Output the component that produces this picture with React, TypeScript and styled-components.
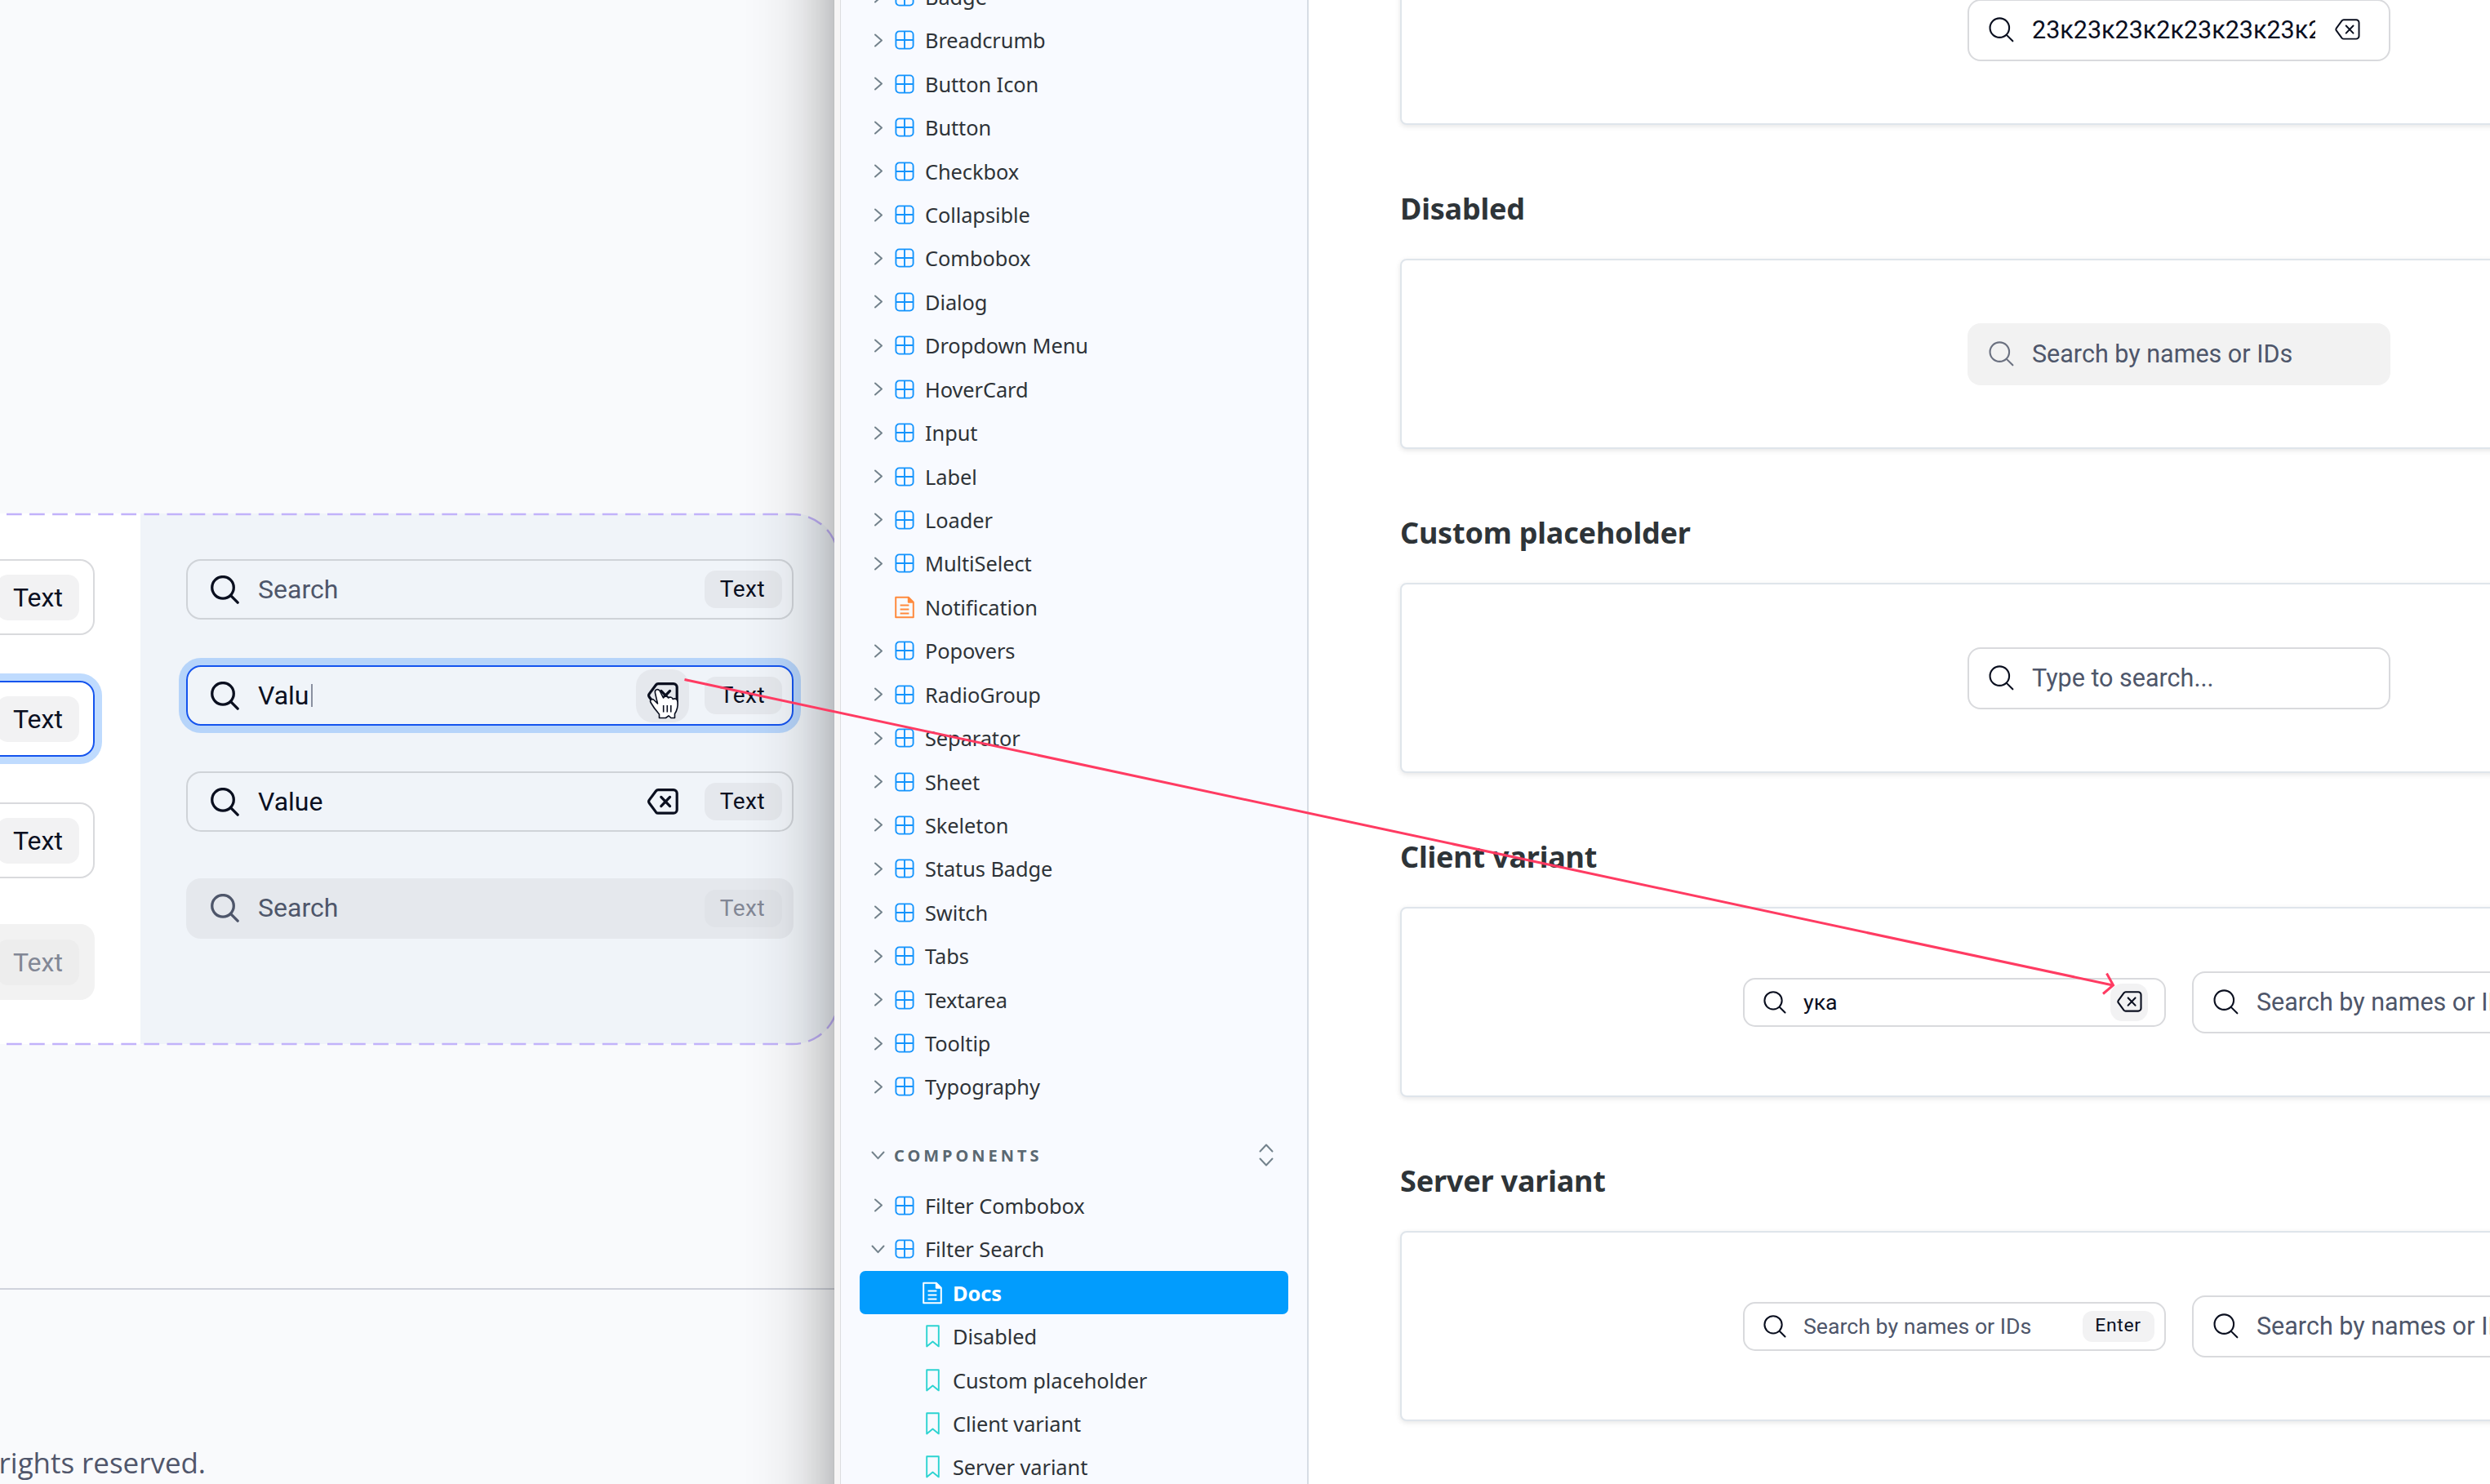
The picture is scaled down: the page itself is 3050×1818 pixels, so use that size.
import React from "react";
import styled, { createGlobalStyle, css } from "styled-components";

const GlobalStyle = createGlobalStyle`
  *, *::before, *::after { box-sizing: border-box; }
  body { margin: 0; background: #ffffff; }
`;

const ui = `Roboto, "Noto Sans", sans-serif`;
const book = `"Noto Sans", "Open Sans", sans-serif`;

const Screen = styled.div`
  position: relative;
  display: flex;
  width: 3050px;
  height: 1818px;
  overflow: hidden;
  background: #ffffff;
  font-family: ${ui};
`;

/* ---------- design canvas (left) ---------- */

const Canvas = styled.section`
  position: relative;
  display: flex;
  flex-direction: column;
  flex: none;
  width: 1022px;
  height: 100%;
  overflow: hidden;
  background: #f9fafc;
`;

const CanvasShade = styled.div`
  position: absolute;
  inset: 0 0 0 auto;
  width: 112px;
  border-right: 1px solid rgba(0, 0, 0, 0.24);
  background: linear-gradient(
    to right,
    rgba(0, 0, 0, 0) 0%,
    rgba(0, 0, 0, 0.012) 22%,
    rgba(0, 0, 0, 0.035) 45%,
    rgba(0, 0, 0, 0.08) 65%,
    rgba(0, 0, 0, 0.145) 84%,
    rgba(0, 0, 0, 0.21) 100%
  );
`;

const VariantPanel = styled.div`
  position: relative;
  display: flex;
  width: 1027px;
  height: 650px;
  margin-top: 629px;
`;

const PanelOutline = styled.svg`
  position: absolute;
  left: 0;
  top: 0;
  overflow: visible;
`;

const LightColumn = styled.div`
  display: flex;
  flex-direction: column;
  align-items: flex-end;
  gap: 56px;
  width: 172px;
  padding: 56px 56px 0 0;
  background: #ffffff;
`;

const TintColumn = styled.div`
  display: flex;
  flex-direction: column;
  gap: 56.2px;
  flex: 1;
  padding: 56px 56px 0;
  border-radius: 0 56px 56px 0;
  background: #f0f4f9;
`;

const Footer = styled.footer`
  height: 240px;
  margin-top: 299px;
  padding-top: 185px;
  border-top: 2px solid #d0d3dc;
`;

const FooterText = styled.p`
  display: flex;
  justify-content: flex-end;
  width: 252px;
  margin: 0;
  font: 400 35px/54px "Open Sans", sans-serif;
  letter-spacing: -0.05px;
  white-space: nowrap;
  color: #50566b;
`;

/* ---------- search field ---------- */

type Kind = "tall" | "canvas" | "small" | "large";
type State = "idle" | "focus" | "disabled";

const kinds = {
  tall: css`width: 360px; height: 93px; padding: 0 17px; border-radius: 18px; font-size: 32px;`,
  canvas: css`width: 744px; height: 74px; padding: 0 12px 0 28px; border-radius: 18px; font-size: 32px;`,
  small: css`width: 518px; height: 60px; padding: 0 12px 0 23px; border-radius: 15px; font-size: 26.7px;`,
  large: css`width: 518px; height: 76px; padding: 0 12px 0 24px; border-radius: 16px; font-size: 30.5px;`,
};

const Field = styled.div<{ $kind: Kind; $state: State; $tint?: boolean }>`
  display: flex;
  align-items: center;
  flex: none;
  border: 2px solid #d9dadd;
  color: #0a0f1f;
  line-height: 1;
  ${(p) => kinds[p.$kind]}
  ${(p) => p.$tint && css`border-color: #cfd3d8;`}
  ${(p) =>
    p.$state === "focus" &&
    css`
      border-color: #1454ee;
      box-shadow: 0 0 0 9px ${p.$tint ? "#b6d4fa" : "#bfdbfe"};
    `}
  ${(p) =>
    p.$state === "disabled" &&
    css`
      border-color: transparent;
      background: ${p.$tint ? "#e5e8ed" : "#f2f2f2"};
    `}
`;

const Value = styled.span<{ $muted?: boolean; $gap: number; $width?: number }>`
  display: block;
  flex: none;
  margin-left: ${(p) => p.$gap}px;
  ${(p) => p.$width && css`width: ${p.$width}px;`}
  padding-top: 1px;
  overflow: hidden;
  line-height: 1.3;
  white-space: nowrap;
  color: ${(p) => (p.$muted ? "#4e566a" : "#0a0f1f")};
`;

const Caret = styled.span`
  width: 2px;
  height: 28px;
  margin-left: 3px;
  background: #8a90a0;
`;

const Spacer = styled.span`
  flex: 1;
`;

const Key = styled.kbd<{ $kind: Kind; $tint?: boolean; $off?: boolean }>`
  display: flex;
  align-items: center;
  justify-content: center;
  flex: none;
  font-family: ${ui};
  background: ${(p) => (p.$tint ? "#e5e8ed" : "#f2f2f3")};
  ${(p) => p.$kind === "tall" && css`width: 101px; height: 56px; border-radius: 14px; font-size: 32px;`}
  ${(p) => p.$kind === "canvas" && css`width: 95px; height: 46px; padding-right: 2px; border-radius: 14px; font-size: 28px; letter-spacing: 0.5px;`}
  ${(p) => p.$kind === "small" && css`width: 88px; height: 38px; padding-right: 1px; border-radius: 12px; font-size: 22.9px; letter-spacing: 0.7px;`}
  ${(p) =>
    p.$off &&
    css`
      color: #828795;
      background: ${p.$tint ? "#e0e3e8" : "#ededed"};
    `}
`;

const ClearButton = styled.span<{ $size: number; $gap: number; $hover?: string }>`
  display: flex;
  align-items: center;
  justify-content: center;
  flex: none;
  width: ${(p) => p.$size}px;
  height: ${(p) => p.$size}px;
  margin-right: ${(p) => p.$gap}px;
  border-radius: ${(p) => p.$size * 0.32}px;
  background: ${(p) => p.$hover ?? "transparent"};
`;

const Magnifier = ({ size, weight, color = "#0a0f1f" }: { size: number; weight: number; color?: string }) => (
  <svg width={size} height={size} viewBox="0 0 34 34" fill="none" stroke={color} strokeWidth={weight} strokeLinecap="round">
    <circle cx="14.6" cy="14.4" r="12.9" />
    <path d="M24 24L32.2 32.2" />
  </svg>
);

const Erase = ({ width, weight }: { width: number; weight: number }) => (
  <svg width={width} height={(width * 32) / 38} viewBox="0 0 38 32" fill="none" stroke="#0a0f1f" strokeWidth={weight} strokeLinecap="round" strokeLinejoin="round">
    <path d="M13.2 1.6H32a4.2 4.2 0 0 1 4.2 4.2V26a4.2 4.2 0 0 1-4.2 4.2H13.2a3.4 3.4 0 0 1-2.7-1.3L2.4 18a3.4 3.4 0 0 1 0-4.1L10.5 3a3.4 3.4 0 0 1 2.7-1.4Z" />
    <path d="M16.8 10.4L27.6 21.6M27.6 10.4L16.8 21.6" />
  </svg>
);

const CanvasField = ({ text, state = "idle", muted, clear, caret }: { text: string; state?: State; muted?: boolean; clear?: "idle" | "hover"; caret?: boolean }) => (
  <Field $kind="canvas" $state={state} $tint>
    <Magnifier size={35} weight={3.2} color={state === "disabled" ? "#4e566a" : undefined} />
    <Value $muted={muted} $gap={23}>{text}</Value>
    {caret && <Caret />}
    <Spacer />
    {clear && (
      <ClearButton $size={65} $gap={19} $hover={clear === "hover" ? "#e5e8ed" : undefined}>
        <Erase width={38} weight={3.2} />
      </ClearButton>
    )}
    <Key $kind="canvas" $tint $off={state === "disabled"}>Text</Key>
  </Field>
);

const TallField = ({ state = "idle" }: { state?: State }) => (
  <Field $kind="tall" $state={state}>
    <Spacer />
    <Key $kind="tall" $off={state === "disabled"}>Text</Key>
  </Field>
);

/* ---------- component browser (right) ---------- */

const Browser = styled.section`
  display: flex;
  flex: 1;
  height: 100%;
  border-left: 7px solid #f6f5f5;
  background: #ffffff;
`;

const Sidebar = styled.nav`
  flex: none;
  width: 574px;
  height: 1860px;
  margin-top: -30.8px;
  padding: 0 23px;
  border-left: 1px solid #dcdde0;
  border-right: 2px solid #d7dde5;
  background: #f8faff;
  font-family: ${book};
`;

const TreeRow = styled.div<{ $active?: boolean; $child?: boolean }>`
  display: grid;
  grid-template-columns: ${(p) => (p.$child ? "73px 41px 1fr" : "39px 41px 1fr")};
  align-items: center;
  height: 53.43px;
  border-radius: 7px;
  color: ${(p) => (p.$active ? "#ffffff" : "#2e3338")};
  background: ${(p) => (p.$active ? "#029cfd" : "transparent")};
  font-size: 25.4px;
  font-weight: ${(p) => (p.$active ? 700 : 400)};
  letter-spacing: -0.08px;
  white-space: nowrap;
`;

const ArrowCell = styled.span`
  display: flex;
  justify-content: center;
  width: 45px;
`;

const IconCell = styled.span`
  display: flex;
  justify-content: center;
  width: 32px;
`;

const GroupRow = styled.div`
  display: flex;
  align-items: center;
  height: 60px;
  margin: 27px 0 5px;
  padding: 0 18px 0 0;
  color: #5a6872;
`;

const GroupName = styled.span`
  flex: 1;
  margin-left: -3px;
  font-size: 20px;
  font-weight: 700;
  letter-spacing: 4px;
`;

const ChevronRight = () => (
  <svg width="12" height="17" viewBox="0 0 12 17" fill="none" stroke="#73828c" strokeWidth="2" strokeLinecap="round" strokeLinejoin="round">
    <path d="M2 1.5L10 8.5L2 15.5" />
  </svg>
);

const ChevronDown = () => (
  <svg width="17" height="11" viewBox="0 0 17 11" fill="none" stroke="#73828c" strokeWidth="2" strokeLinecap="round" strokeLinejoin="round">
    <path d="M1.5 1.5L8.5 9.2L15.5 1.5" />
  </svg>
);

const Unfold = () => (
  <svg width="18" height="28" viewBox="0 0 18 28" fill="none" stroke="#73828c" strokeWidth="2" strokeLinecap="round" strokeLinejoin="round">
    <path d="M1.5 9.5L9 1.5L16.5 9.5M1.5 18.5L9 26.5L16.5 18.5" />
  </svg>
);

const GridIcon = () => (
  <svg width="24" height="24" viewBox="0 0 24 24" fill="none" stroke="#1494fd" strokeWidth="1.9">
    <rect x="1.4" y="1.4" width="21.2" height="21.2" rx="4" />
    <path d="M12 1.5V22.5M1.5 12H22.5" />
  </svg>
);

const DocIcon = ({ color }: { color: string }) => (
  <svg width="24" height="28" viewBox="0 0 24 28" fill="none" stroke={color} strokeWidth="2" strokeLinejoin="round">
    <path d="M1.2 1.8H16.8L22.8 7.8V26.2H1.2Z" />
    <path d="M16.8 1.8V7.8H22.8" fill={color} />
    <path d="M6.6 11.4H17.4M6.6 16.4H17.4M6.6 21.4H17.4" />
  </svg>
);

const BookmarkIcon = () => (
  <svg width="17" height="28" viewBox="0 0 17 28" fill="none" stroke="#2cd3d1" strokeWidth="1.9" strokeLinejoin="round">
    <path d="M1.2 1.2H15.8V26.4L8.5 20.4L1.2 26.4Z" />
  </svg>
);

const Preview = styled.main`
  flex: 1;
  min-width: 0;
  padding-left: 112px;
  overflow: hidden;
`;

const Story = styled.article<{ $first?: boolean }>`
  height: 397px;
  ${(p) => p.$first && css`margin-top: -244px;`}
`;

const StoryTitle = styled.h3`
  margin: 0;
  padding-top: 78px;
  height: 164px;
  color: #2e3438;
  font: 700 36px/50px ${book};
  letter-spacing: -0.2px;
`;

const StoryCard = styled.div`
  display: flex;
  align-items: center;
  justify-content: center;
  gap: 32px;
  width: 1908px;
  height: 233px;
  border: 2px solid #dfe5eb;
  border-radius: 8px;
  box-shadow: 0 2px 6px rgba(0, 0, 0, 0.1);
  background: #ffffff;
`;

const primitives = [
  "Badge", "Breadcrumb", "Button Icon", "Button", "Checkbox", "Collapsible", "Combobox", "Dialog",
  "Dropdown Menu", "HoverCard", "Input", "Label", "Loader", "MultiSelect", "Notification", "Popovers",
  "RadioGroup", "Separator", "Sheet", "Skeleton", "Status Badge", "Switch", "Tabs", "Textarea",
  "Tooltip", "Typography",
];
const stories = ["Disabled", "Custom placeholder", "Client variant", "Server variant"];

const TreeItem = ({ name, open }: { name: string; open?: boolean }) => {
  const isDoc = name === "Notification";
  return (
    <TreeRow>
      <ArrowCell>{!isDoc && (open ? <ChevronDown /> : <ChevronRight />)}</ArrowCell>
      <IconCell>{isDoc ? <DocIcon color="#ff8a3d" /> : <GridIcon />}</IconCell>
      {name}
    </TreeRow>
  );
};

const LargeSearch = ({ text, muted = true, state = "idle", clear }: { text: string; muted?: boolean; state?: State; clear?: boolean }) => (
  <Field $kind="large" $state={state}>
    <Magnifier size={31} weight={2.3} color={state === "disabled" ? "#6b7180" : undefined} />
    <Value $muted={muted} $gap={22} $width={clear ? 347 : undefined}>{text}</Value>
    <Spacer />
    {clear && (
      <ClearButton $size={46} $gap={16}>
        <Erase width={31} weight={2.4} />
      </ClearButton>
    )}
  </Field>
);

const SmallSearch = ({ text, muted, children }: { text: string; muted?: boolean; children: React.ReactNode }) => (
  <Field $kind="small" $state="idle">
    <Magnifier size={28} weight={2.5} />
    <Value $muted={muted} $gap={21}>{text}</Value>
    <Spacer />
    {children}
  </Field>
);

/* ---------- annotation and pointer, over everything ---------- */

const Annotation = styled.svg`
  position: absolute;
  left: 0;
  top: 0;
  pointer-events: none;
`;

const HandPointer = styled.svg`
  position: absolute;
  left: 794px;
  top: 842px;
`;

export default function App() {
  return (
    <Screen>
      <GlobalStyle />
      <Canvas>
        <VariantPanel>
          <LightColumn>
            <TallField />
            <TallField state="focus" />
            <TallField />
            <TallField state="disabled" />
          </LightColumn>
          <TintColumn>
            <CanvasField text="Search" muted />
            <CanvasField text="Valu" state="focus" clear="hover" caret />
            <CanvasField text="Value" clear="idle" />
            <CanvasField text="Search" muted state="disabled" />
          </TintColumn>
          <PanelOutline width="1028" height="652" fill="none" stroke="#c2b2fa" strokeWidth="2.4" strokeDasharray="18.7 9.37">
            <path d="M8 1H971A56 56 0 0 1 1027 57V300" />
            <path d="M8 650H971A56 56 0 0 0 1027 594V400" />
          </PanelOutline>
        </VariantPanel>
        <Footer>
          <FooterText>rights reserved.</FooterText>
        </Footer>
        <CanvasShade />
      </Canvas>

      <Browser>
        <Sidebar>
          {primitives.map((name) => (
            <TreeItem key={name} name={name} />
          ))}
          <GroupRow>
            <ArrowCell><ChevronDown /></ArrowCell>
            <GroupName>COMPONENTS</GroupName>
            <Unfold />
          </GroupRow>
          <TreeItem name="Filter Combobox" />
          <TreeItem name="Filter Search" open />
          <TreeRow $child $active>
            <span />
            <IconCell><DocIcon color="#ffffff" /></IconCell>
            Docs
          </TreeRow>
          {stories.map((name) => (
            <TreeRow key={name} $child>
              <span />
              <IconCell><BookmarkIcon /></IconCell>
              {name}
            </TreeRow>
          ))}
        </Sidebar>
        <Preview>
          <Story $first>
            <StoryTitle />
            <StoryCard>
              <LargeSearch text="23к23к23к2к23к23к23к23к" muted={false} clear />
            </StoryCard>
          </Story>
          <Story>
            <StoryTitle>Disabled</StoryTitle>
            <StoryCard>
              <LargeSearch text="Search by names or IDs" state="disabled" />
            </StoryCard>
          </Story>
          <Story>
            <StoryTitle>Custom placeholder</StoryTitle>
            <StoryCard>
              <LargeSearch text="Type to search..." />
            </StoryCard>
          </Story>
          <Story>
            <StoryTitle>Client variant</StoryTitle>
            <StoryCard>
              <SmallSearch text="ука">
                <ClearButton $size={46} $gap={8} $hover="#f2f2f3">
                  <Erase width={31} weight={2.6} />
                </ClearButton>
              </SmallSearch>
              <LargeSearch text="Search by names or IDs" />
            </StoryCard>
          </Story>
          <Story>
            <StoryTitle>Server variant</StoryTitle>
            <StoryCard>
              <SmallSearch text="Search by names or IDs" muted>
                <Key $kind="small">Enter</Key>
              </SmallSearch>
              <LargeSearch text="Search by names or IDs" />
            </StoryCard>
          </Story>
        </Preview>
      </Browser>

      <HandPointer width="38" height="40" viewBox="0 0 38 40" fill="#ffffff" stroke="#0a0f1f" strokeWidth="1.6" strokeLinejoin="round">
        <path d="M13.5 37.5V33C10 29 5.5 23 3 18.5C1.5 15.5 4.5 13.5 7 15.5L11.5 20L8.5 7C7.5 2.5 12.5 1 14.5 5L18.5 13C20 10.5 23.5 10.7 24.5 13C26.5 11.5 29.5 12 30.2 14.5C33 13 36 14.500 36 18C36.5 23 35.5 28 32.5 32.5V37.5H28L25 34.8L21.5 37.5Z" />
        <path d="M18.700 22V30.500M23.300 22V30.500M27.800 22V30.500" fill="none" />
      </HandPointer>
      <Annotation width="3050" height="1818" fill="none" stroke="#ff3b62" strokeWidth="3">
        <path d="M838.500 832.500L2588 1207M2580.500 1192.500L2588.500 1207L2576 1217.500" />
      </Annotation>
    </Screen>
  );
}
